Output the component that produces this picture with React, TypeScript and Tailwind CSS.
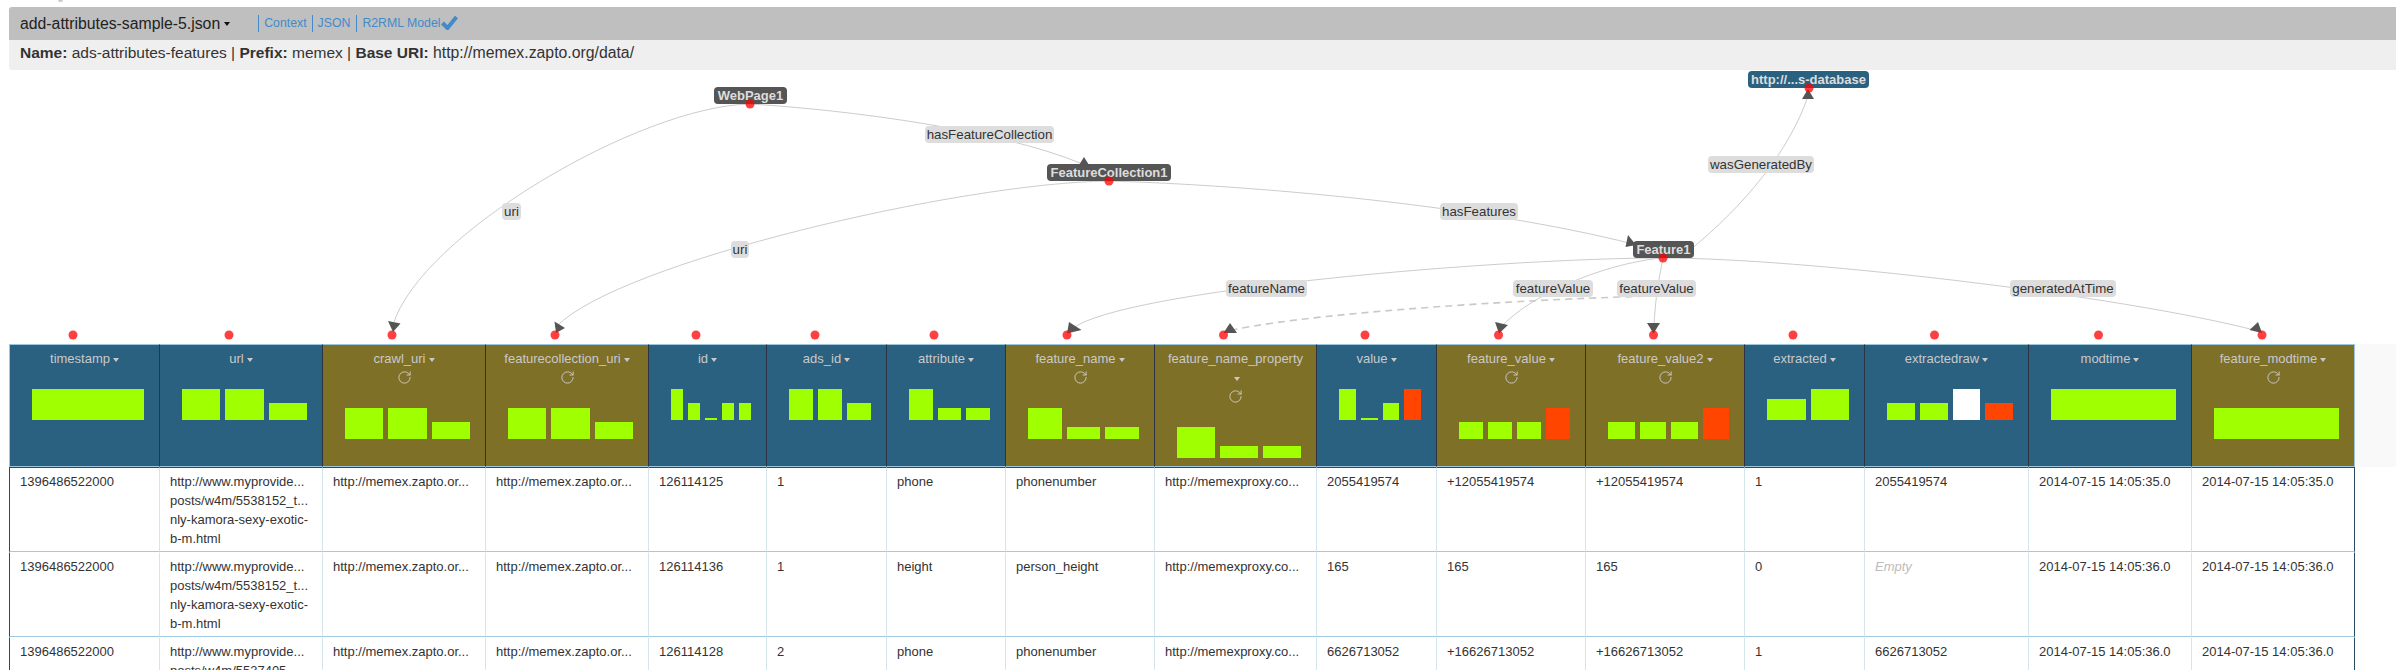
import { RotateCw } from "lucide-react";

const L = "#a0ff00";
const O = "#ff4500";
const W = "#ffffff";
type Bar = [number, string];
type Col = { name: string; w: number; olive?: boolean; bars: Bar[] };

const cols: Col[] = [
  { name: "timestamp", w: 150, bars: [[31, L]] },
  { name: "url", w: 163, bars: [[31, L], [31, L], [17, L]] },
  { name: "crawl_uri", w: 163, olive: true, bars: [[31, L], [31, L], [17, L]] },
  { name: "featurecollection_uri", w: 163, olive: true, bars: [[31, L], [31, L], [17, L]] },
  { name: "id", w: 118, bars: [[31, L], [17, L], [2, L], [17, L], [17, L]] },
  { name: "ads_id", w: 120, bars: [[31, L], [31, L], [17, L]] },
  { name: "attribute", w: 119, bars: [[31, L], [12, L], [12, L]] },
  { name: "feature_name", w: 149, olive: true, bars: [[31, L], [12, L], [12, L]] },
  { name: "feature_name_property", w: 162, olive: true, bars: [[31, L], [12, L], [12, L]] },
  { name: "value", w: 120, bars: [[31, L], [2, L], [17, L], [31, O]] },
  { name: "feature_value", w: 149, olive: true, bars: [[17, L], [17, L], [17, L], [31, O]] },
  { name: "feature_value2", w: 159, olive: true, bars: [[17, L], [17, L], [17, L], [31, O]] },
  { name: "extracted", w: 120, bars: [[21, L], [31, L]] },
  { name: "extractedraw", w: 164, bars: [[17, L], [17, L], [31, W], [17, O]] },
  { name: "modtime", w: 163, bars: [[31, L]] },
  { name: "feature_modtime", w: 164, olive: true, bars: [[31, L]] },
];

const memex = "http://memex.zapto.or...";
const proxy = "http://memexproxy.co...";
const url1 = ["http://www.myprovide...", "posts/w4m/5538152_t...", "nly-kamora-sexy-exotic-", "b-m.html"];
const url2 = ["http://www.myprovide...", "posts/w4m/5537405_..."];

const rows: (string | string[] | null)[][] = [
  ["1396486522000", url1, memex, memex, "126114125", "1", "phone", "phonenumber", proxy, "2055419574", "+12055419574", "+12055419574", "1", "2055419574", "2014-07-15 14:05:35.0", "2014-07-15 14:05:35.0"],
  ["1396486522000", url1, memex, memex, "126114136", "1", "height", "person_height", proxy, "165", "165", "165", "0", null, "2014-07-15 14:05:36.0", "2014-07-15 14:05:36.0"],
  ["1396486522000", url2, memex, memex, "126114128", "2", "phone", "phonenumber", proxy, "6626713052", "+16626713052", "+16626713052", "1", "6626713052", "2014-07-15 14:05:36.0", "2014-07-15 14:05:36.0"],
];

const edges = [
  "M750,104 C640,106 420,235 393,325",
  "M750,104 C850,110 1000,130 1080,163",
  "M1108,181 C960,183 620,262 557,326",
  "M1108,181 C1250,185 1480,205 1633,244",
  "M1690,250 C1745,205 1790,150 1808,96",
  "M1663,258 C1500,258 1120,290 1072,329",
  "M1660,258 C1600,265 1530,295 1500,328",
  "M1663,258 C1660,275 1656,290 1654,325",
  "M1663,258 C1800,258 2120,295 2258,331",
];

const arrows = [
  "388,321 400.5,323.5 393,332",
  "1084,157 1089,165 1079,165",
  "554.5,321.5 565,328 556,333",
  "1628,235 1636,245 1625.5,247",
  "1808,89 1814,99 1802,99",
  "1069,322 1081.5,330 1067,333.5",
  "1230,323 1237,333 1223.5,333",
  "1495,322 1508,325 1499,333.5",
  "1647,323 1660,323 1653.5,333.5",
  "2258,322 2262,333 2249.5,330",
];

const labels: [string, number, number, number][] = [
  ["uri", 502, 19, 203],
  ["hasFeatureCollection", 925, 129, 126],
  ["uri", 731, 18, 241],
  ["hasFeatures", 1440, 78, 203],
  ["wasGeneratedBy", 1708, 106, 156],
  ["featureName", 1226, 81, 280],
  ["featureValue", 1513, 80, 280],
  ["featureValue", 1617, 79, 280],
  ["generatedAtTime", 2010, 106, 280],
];

const nodes: [string, number, number, number, string][] = [
  ["WebPage1", 714, 73, 87, "#555555"],
  ["FeatureCollection1", 1047, 124, 164, "#555555"],
  ["Feature1", 1633, 61, 241, "#555555"],
  ["http://...s-database", 1748, 121, 71, "#2a6180"],
];

const dots: [number, number][] = [
  [750, 104], [1109, 181], [1663, 258], [1809, 88],
  [73, 335], [229, 335], [392, 335], [555, 335], [696, 335], [815, 335], [934, 335], [1067, 335],
  [1223.5, 335], [1365, 335], [1498.5, 335], [1653.5, 335], [1793, 335], [1934.5, 335], [2098.5, 335], [2262, 335],
];

function Caret({ className }: { className: string }) {
  return <span className={`inline-block w-0 h-0 align-middle border-x-[3px] border-x-transparent border-t-[4px] ${className}`} />;
}

function Graph() {
  return (
    <svg viewBox="0 70 2396 274" width="2396" height="274" className="block">
      {edges.map((d) => (
        <path key={d} d={d} fill="none" stroke="#cccccc" strokeWidth="1" />
      ))}
      <path d="M1656,296 C1560,298 1330,310 1232,330" fill="none" stroke="#c9c9c9" strokeWidth="1.6" strokeDasharray="7 5" />
      {arrows.map((p) => (
        <polygon key={p} points={p} fill="#555555" />
      ))}
      {labels.map(([t, x, w, y]) => (
        <g key={t + x}>
          <rect x={x} y={y} width={w} height={17} rx={4} fill="#dddddd" />
          <text x={x + w / 2} y={y + 13} textAnchor="middle" fontSize="13.3" fill="#333333">{t}</text>
        </g>
      ))}
      {nodes.map(([t, x, w, y, c]) => (
        <g key={t}>
          <rect x={x} y={y} width={w} height={17} rx={4} fill={c} />
          <text x={x + w / 2} y={y + 13} textAnchor="middle" fontSize="13" fontWeight="700" fill="#dddddd">{t}</text>
        </g>
      ))}
      {dots.map(([x, y]) => (
        <circle key={x} cx={x} cy={y} r={4.5} fill="#ff0000" fillOpacity="0.75" />
      ))}
    </svg>
  );
}

function HeaderCell({ col, first }: { col: Col; first: boolean }) {
  const refresh = col.olive;
  return (
    <th
      className={`h-[123px] p-0 align-top font-normal border-t border-b border-t-[#9cc6dd] border-b-[#9cc6dd] ${first ? "border-l border-l-[#9cc6dd]" : "border-l border-l-[#2b3440]"} ${col.olive ? "bg-[#7f7028]" : "bg-[#2a6180]"} ${col.name === "feature_modtime" ? "border-r border-r-[#9cc6dd]" : ""}`}
    >
      <div className="pt-[4px] px-[10px] text-center text-[13px] leading-[19px] text-[#c9c9c9]">
        {col.name}
        <Caret className="ml-[3px] border-t-[#c9c9c9]" />
      </div>
      {refresh && (
        <div className="flex justify-center items-center h-[19px]">
          <RotateCw size={15} strokeWidth={1.5} className="text-[#cccccc]" />
        </div>
      )}
      <div className="flex items-end gap-[5px] pl-[22px] pr-[15px] mt-[21px] h-[31px]">
        {col.bars.map(([h, c], i) => (
          <div key={i} className="flex-1" style={{ height: h, backgroundColor: c }} />
        ))}
      </div>
    </th>
  );
}

function Cell({ v, i, row }: { v: string | string[] | null; i: number; row: number }) {
  return (
    <td
      className={`h-[85px] pt-[4px] pl-[10px] pr-0 align-top whitespace-nowrap overflow-hidden text-[13px] leading-[19px] text-[#333333] border-b border-b-[#9fcae3] border-t ${row === 0 ? "border-t-[#2a4a60]" : "border-t-transparent"} border-l ${i === 0 ? "border-l-[#2a4a60]" : "border-l-[#d5e5ee]"} ${i === 15 ? "border-r border-r-[#2a4a60]" : ""}`}
    >
      {v === null ? (
        <span className="italic text-[#bbbbbb]">Empty</span>
      ) : Array.isArray(v) ? (
        v.map((l) => (
          <div key={l}>{l}</div>
        ))
      ) : (
        v
      )}
    </td>
  );
}

export default function App() {
  return (
    <div className="w-[2396px] h-[670px] overflow-hidden bg-white font-['Liberation_Sans',Arial,sans-serif]">
      <div className="h-[7px] pl-[58px]">
        <div className="w-[5px] h-[2px] bg-[#cccccc] rounded-b-sm" />
      </div>
      <div className="pl-[9px]">
        <div className="flex items-center h-[33px] pl-[11px] bg-[#bfbfbf] rounded-tl-[3px]">
          <span className="text-[15.8px] text-[#222222]">add-attributes-sample-5.json</span>
          <Caret className="ml-[4px] border-t-[#111111]" />
          <div className="flex items-center ml-[28px] text-[12.3px] leading-[17px] text-[#428bca]">
            <a className="border-l border-l-[#428bca] pl-[5px] pr-[5px]">Context</a>
            <a className="border-l border-l-[#428bca] pl-[5px] pr-[6px]">JSON</a>
            <a className="border-l border-l-[#428bca] pl-[5px]">R2RML Model</a>
            <svg width="17" height="15" viewBox="0 0 17 15" className="block -mt-[3px]">
              <path d="M1.5 8 L6.5 13 L15.5 2" fill="none" stroke="#428bca" strokeWidth="4" />
            </svg>
          </div>
        </div>
        <div className="h-[30px] pl-[11px] pt-[3px] bg-[#efefef] text-[15.5px] leading-[20px] text-[#333333] rounded-bl-[3px]">
          <b>Name:</b> ads-attributes-features | <b>Prefix:</b> memex | <b>Base URI:</b>{" "}
          <span className="text-[15.8px]">http://memex.zapto.org/data/</span>
        </div>
      </div>
      <Graph />
      <div className="relative pl-[9px]">
        <div className="absolute right-0 top-0 w-[41px] h-[123px] bg-[#f9f9f9]" />
        <table className="table-fixed border-separate border-spacing-0 w-[2346px]">
          <colgroup>
            {cols.map((c) => (
              <col key={c.name} style={{ width: c.w }} />
            ))}
          </colgroup>
          <thead>
            <tr>
              {cols.map((c, i) => (
                <HeaderCell key={c.name} col={c} first={i === 0} />
              ))}
            </tr>
          </thead>
          <tbody>
            {rows.map((r, ri) => (
              <tr key={ri}>
                {r.map((v, i) => (
                  <Cell key={i} v={v} i={i} row={ri} />
                ))}
              </tr>
            ))}
          </tbody>
        </table>
      </div>
    </div>
  );
}
